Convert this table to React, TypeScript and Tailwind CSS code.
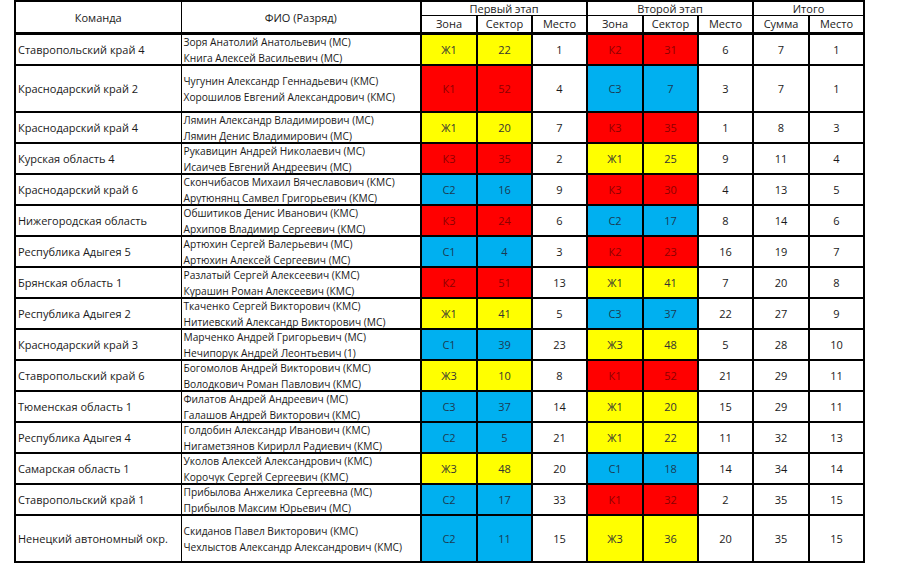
import React from "react";

type Row = {
  team: string;
  names: [string, string];
  z1: string;
  s1: number;
  p1: number;
  z2: string;
  s2: number;
  p2: number;
  sum: number;
  place: number;
  tall?: boolean;
};

const rows: Row[] = [
  { team: "Ставропольский край 4", names: ["Зоря Анатолий Анатольевич (МС)", "Книга Алексей Васильевич (МС)"], z1: "Ж1", s1: 22, p1: 1, z2: "К2", s2: 31, p2: 6, sum: 7, place: 1 },
  { team: "Краснодарский край 2", names: ["Чугунин Александр Геннадьевич (КМС)", "Хорошилов Евгений Александрович (КМС)"], z1: "К1", s1: 52, p1: 4, z2: "С3", s2: 7, p2: 3, sum: 7, place: 1, tall: true },
  { team: "Краснодарский край 4", names: ["Лямин Александр Владимирович (МС)", "Лямин Денис Владимирович (МС)"], z1: "Ж1", s1: 20, p1: 7, z2: "К3", s2: 35, p2: 1, sum: 8, place: 3 },
  { team: "Курская область 4", names: ["Рукавицин Андрей Николаевич (МС)", "Исаичев Евгений Андреевич (МС)"], z1: "К3", s1: 35, p1: 2, z2: "Ж1", s2: 25, p2: 9, sum: 11, place: 4 },
  { team: "Краснодарский край 6", names: ["Скончибасов Михаил Вячеславович (КМС)", "Арутюнянц Самвел Григорьевич (КМС)"], z1: "С2", s1: 16, p1: 9, z2: "К3", s2: 30, p2: 4, sum: 13, place: 5 },
  { team: "Нижегородская область", names: ["Обшитиков Денис Иванович (КМС)", "Архипов Владимир Сергеевич (КМС)"], z1: "К3", s1: 24, p1: 6, z2: "С2", s2: 17, p2: 8, sum: 14, place: 6 },
  { team: "Республика Адыгея 5", names: ["Артюхин Сергей Валерьевич (МС)", "Артюхин Алексей Сергеевич (МС)"], z1: "С1", s1: 4, p1: 3, z2: "К2", s2: 23, p2: 16, sum: 19, place: 7 },
  { team: "Брянская область 1", names: ["Разлатый Сергей Алексеевич (КМС)", "Курашин Роман Алексеевич (КМС)"], z1: "К2", s1: 51, p1: 13, z2: "Ж1", s2: 41, p2: 7, sum: 20, place: 8 },
  { team: "Республика Адыгея 2", names: ["Ткаченко Сергей Викторович (КМС)", "Нитиевский Александр Викторович (МС)"], z1: "Ж1", s1: 41, p1: 5, z2: "С3", s2: 37, p2: 22, sum: 27, place: 9 },
  { team: "Краснодарский край 3", names: ["Марченко Андрей Григорьевич (МС)", "Нечипорук Андрей Леонтьевич (1)"], z1: "С1", s1: 39, p1: 23, z2: "Ж3", s2: 48, p2: 5, sum: 28, place: 10 },
  { team: "Ставропольский край 6", names: ["Богомолов Андрей Викторович (КМС)", "Володкович Роман Павлович (КМС)"], z1: "Ж3", s1: 10, p1: 8, z2: "К1", s2: 52, p2: 21, sum: 29, place: 11 },
  { team: "Тюменская область 1", names: ["Филатов Андрей Андреевич (МС)", "Галашов Андрей Викторович (КМС)"], z1: "С3", s1: 37, p1: 14, z2: "Ж1", s2: 20, p2: 15, sum: 29, place: 11 },
  { team: "Республика Адыгея 4", names: ["Голдобин Александр Иванович (КМС)", "Нигаметзянов Кирирлл Радиевич (КМС)"], z1: "С2", s1: 5, p1: 21, z2: "Ж1", s2: 22, p2: 11, sum: 32, place: 13 },
  { team: "Самарская область 1", names: ["Уколов Алексей Александрович (КМС)", "Корочук Сергей Сергеевич (КМС)"], z1: "Ж3", s1: 48, p1: 20, z2: "С1", s2: 18, p2: 14, sum: 34, place: 14 },
  { team: "Ставропольский край 1", names: ["Прибылова Анжелика Сергеевна (МС)", "Прибылов Максим Юрьевич (МС)"], z1: "С2", s1: 17, p1: 33, z2: "К1", s2: 32, p2: 2, sum: 35, place: 15 },
  { team: "Ненецкий автономный окр.", names: ["Скиданов Павел Викторович (КМС)", "Чехлыстов Александр Александрович (КМС)"], z1: "С2", s1: 11, p1: 15, z2: "Ж3", s2: 36, p2: 20, sum: 35, place: 15, tall: true },
];

// zone letter decides the fill
const zoneCls = (z: string) => {
  if (z.startsWith("Ж")) return "bg-[#ffff00] text-[#333]";
  if (z.startsWith("К")) return "bg-[#ff0000] text-[#8c0000]";
  return "bg-[#00b0f0] text-[#1c3a52]";
};

const cell = "border-2 border-black text-center align-middle p-0";

const Box = ({ tall, children, left }: { tall?: boolean; children: React.ReactNode; left?: boolean }) => (
  <div
    className={`${tall ? "h-[45px]" : "h-[29px]"} flex flex-col justify-center overflow-visible ${
      left ? "items-start pl-[2px]" : "items-center"
    }`}
  >
    {children}
  </div>
);

export default function App() {
  return (
    <div className="bg-white w-[900px] h-[563px] overflow-hidden">
      <table
        className="ml-[14px] border-collapse table-fixed text-[11px] leading-[15px] text-[#1a1a1a]"
        style={{ fontFamily: '"Open Sans", "Noto Sans", sans-serif' }}
      >
        <colgroup>
          <col className="w-[166px]" />
          <col className="w-[240px]" />
          <col className="w-[56px]" />
          <col className="w-[55px]" />
          <col className="w-[55px]" />
          <col className="w-[56px]" />
          <col className="w-[55px]" />
          <col className="w-[55px]" />
          <col className="w-[56px]" />
          <col className="w-[55px]" />
        </colgroup>
        <thead>
          <tr>
            <th rowSpan={2} className="border-t-2 border-l-2 border-r border-b-[3px] border-black font-normal p-0">
              Команда
            </th>
            <th rowSpan={2} className="border-t-2 border-l border-r-2 border-b-[3px] border-black font-normal p-0">
              ФИО (Разряд)
            </th>
            {[
              ["Первый этап", 3],
              ["Второй этап", 3],
              ["Итого", 2],
            ].map(([t, n]) => (
              <th key={t as string} colSpan={n as number} className="border-2 border-b border-black font-normal p-0">
                <div className="h-[13px] leading-[13px]">{t}</div>
              </th>
            ))}
          </tr>
          <tr>
            {["Зона", "Сектор", "Место", "Зона", "Сектор", "Место", "Сумма", "Место"].map((h, i) => (
              <th key={i} className="border-2 border-t border-b-[3px] border-black font-normal p-0">
                <div className="h-[16px] leading-[16px]">{h}</div>
              </th>
            ))}
          </tr>
        </thead>
        <tbody>
          {rows.map((r) => (
            <tr key={r.team}>
              <td className="border-t-2 border-b-2 border-l-2 border-r border-black p-0">
                <Box tall={r.tall} left>
                  {r.team}
                </Box>
              </td>
              <td className="border-t-2 border-b-2 border-l border-r-2 border-black p-0">
                <Box tall={r.tall} left>
                  <div className="text-[10.2px] leading-[16px]">{r.names[0]}</div>
                  <div className="text-[10.2px] leading-[16px]">{r.names[1]}</div>
                </Box>
              </td>
              <td className={`${cell} ${zoneCls(r.z1)}`}>
                <Box tall={r.tall}>{r.z1}</Box>
              </td>
              <td className={`${cell} ${zoneCls(r.z1)}`}>
                <Box tall={r.tall}>{r.s1}</Box>
              </td>
              <td className={cell}>
                <Box tall={r.tall}>{r.p1}</Box>
              </td>
              <td className={`${cell} ${zoneCls(r.z2)}`}>
                <Box tall={r.tall}>{r.z2}</Box>
              </td>
              <td className={`${cell} ${zoneCls(r.z2)}`}>
                <Box tall={r.tall}>{r.s2}</Box>
              </td>
              <td className={cell}>
                <Box tall={r.tall}>{r.p2}</Box>
              </td>
              <td className={cell}>
                <Box tall={r.tall}>{r.sum}</Box>
              </td>
              <td className={cell}>
                <Box tall={r.tall}>{r.place}</Box>
              </td>
            </tr>
          ))}
        </tbody>
      </table>
    </div>
  );
}
